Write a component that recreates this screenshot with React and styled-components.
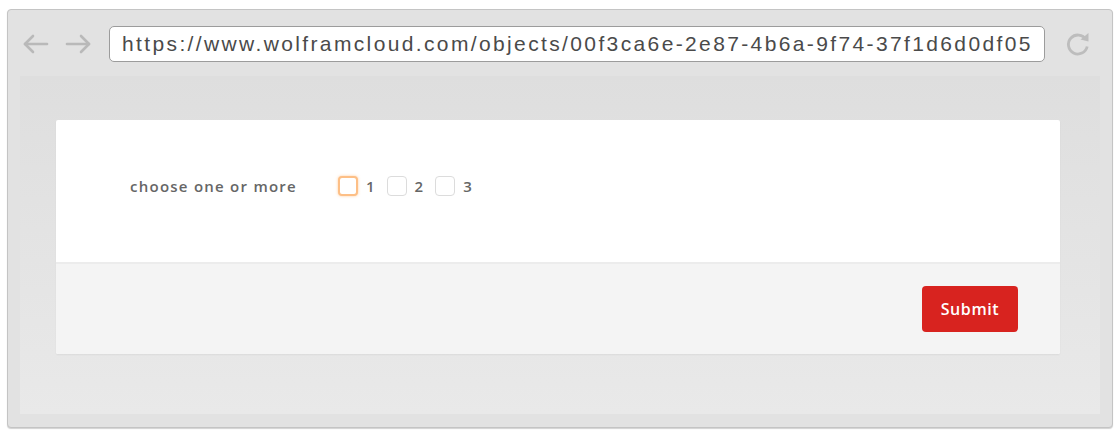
import React from 'react';
import styled, { createGlobalStyle } from 'styled-components';

const Global = createGlobalStyle`
  html, body { margin: 0; padding: 0; background: #ffffff; }
  body { width: 1120px; height: 436px; overflow: hidden; }
`;

const Page = styled.div`
  padding: 9px 7px 0 7px;
`;

const Window = styled.div`
  width: 1106px;
  height: 419px;
  box-sizing: border-box;
  border: 1px solid #c4c4c4;
  border-radius: 4px;
  background: #e2e2e2;
  box-shadow: 0 1px 1px rgba(0, 0, 0, 0.18);
  display: flex;
  flex-direction: column;
  padding: 0 12px 13px 12px;
`;

const Toolbar = styled.div`
  height: 66px;
  display: flex;
  align-items: center;
  padding-top: 1px;
  box-sizing: border-box;
`;

const NavButton = styled.div`
  width: 28px;
  height: 24px;
  display: flex;
  align-items: center;
  justify-content: center;
  margin-left: ${p => p.$gap}px;
`;

const UrlBar = styled.div`
  margin-left: 17px;
  width: 936px;
  height: 36px;
  box-sizing: border-box;
  border: 1px solid #9c9c9c;
  border-radius: 5px;
  background: #ffffff;
  display: flex;
  align-items: center;
  padding-left: 12px;
  font-family: "Liberation Sans", Arial, sans-serif;
  font-size: 21px;
  letter-spacing: 2.37px;
  color: #4a4a4a;
  white-space: nowrap;
  overflow: hidden;
`;

const Reload = styled.div`
  margin-left: 19px;
  width: 28px;
  height: 28px;
  display: flex;
  align-items: center;
  justify-content: center;
`;

const Viewport = styled.div`
  flex: 1;
  background: linear-gradient(#dedede, #e9e9e9);
  padding: 44px 40px 0 36px;
`;

const Card = styled.div`
  background: #ffffff;
  border-radius: 2px;
  box-shadow: 0 1px 2px rgba(0, 0, 0, 0.06);
  overflow: hidden;
`;

const FieldArea = styled.div`
  height: 142px;
  box-sizing: border-box;
  padding: 56px 0 0 74px;
  display: flex;
  align-items: flex-start;
  font-family: "Open Sans", "Liberation Sans", sans-serif;
`;

const Label = styled.div`
  width: 208px;
  font-size: 15px;
  font-weight: 600;
  color: #666666;
  line-height: 20px;
  letter-spacing: 1.25px;
`;

const Options = styled.div`
  display: flex;
  align-items: center;
  gap: 12px;
`;

const Option = styled.label`
  display: flex;
  align-items: center;
  gap: 8px;
  font-size: 15px;
  font-weight: 600;
  color: #666666;
  line-height: 20px;
`;

const Box = styled.span`
  width: 20px;
  height: 20px;
  box-sizing: border-box;
  border-radius: 4px;
  background: #ffffff;
  border: ${p => (p.$focused ? '2px solid #fdbf86' : '1px solid #dcdcdc')};
  box-shadow: ${p => (p.$focused ? '0 0 3px rgba(253, 170, 90, 0.6)' : 'none')};
`;

const Footer = styled.div`
  height: 92px;
  box-sizing: border-box;
  background: #f4f4f4;
  border-top: 2px solid #ececec;
  display: flex;
  align-items: center;
  justify-content: flex-end;
  padding-right: 42px;
`;

const Submit = styled.button`
  width: 96px;
  height: 46px;
  border: none;
  border-radius: 4px;
  background: #d8231f;
  color: #ffffff;
  font-family: "Open Sans", "Liberation Sans", sans-serif;
  font-size: 16px;
  font-weight: 600;
  letter-spacing: 0.6px;
  padding: 0;
  cursor: pointer;
`;

const Arrow = ({ dir }) => (
  <svg width="28" height="24" viewBox="0 0 28 24">
    <g
      fill="none"
      stroke="#b9b9b9"
      strokeWidth="2.6"
      strokeLinecap="round"
      strokeLinejoin="round"
      transform={dir === 'right' ? 'translate(28 0) scale(-1 1)' : undefined}
    >
      <path d="M3 12 H25" />
      <path d="M11 4 L3 12 L11 20" />
    </g>
  </svg>
);

const ReloadIcon = () => (
  <svg width="28" height="28" viewBox="0 0 28 28">
    <path
      d="M22 9.5 A9.5 9.5 0 1 0 23.2 16.5"
      fill="none"
      stroke="#bdbdbd"
      strokeWidth="2.8"
    />
    <path d="M16.5 9.5 L24.5 3 L24.5 11.5 Z" fill="#bdbdbd" />
  </svg>
);

export default function App() {
  return (
    <Page>
      <Global />
      <Window>
        <Toolbar>
          <NavButton $gap={2}><Arrow dir="left" /></NavButton>
          <NavButton $gap={14}><Arrow dir="right" /></NavButton>
          <UrlBar>https://www.wolframcloud.com/objects/00f3ca6e-2e87-4b6a-9f74-37f1d6d0df05</UrlBar>
          <Reload><ReloadIcon /></Reload>
        </Toolbar>
        <Viewport>
          <Card>
            <FieldArea>
              <Label>choose one or more</Label>
              <Options>
                <Option><Box $focused />1</Option>
                <Option><Box />2</Option>
                <Option><Box />3</Option>
              </Options>
            </FieldArea>
            <Footer>
              <Submit>Submit</Submit>
            </Footer>
          </Card>
        </Viewport>
      </Window>
    </Page>
  );
}
